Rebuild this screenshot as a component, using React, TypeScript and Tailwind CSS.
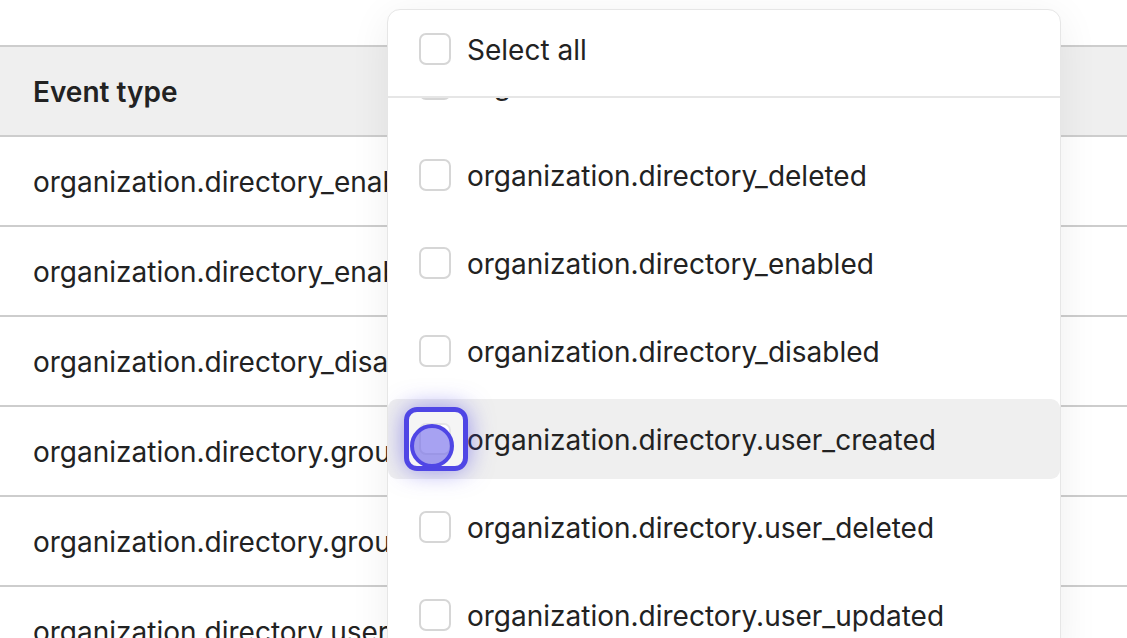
import { useState } from 'react';

const tableRows = [
  'organization.directory_enabled',
  'organization.directory_enabled',
  'organization.directory_disabled',
  'organization.directory.group_created',
  'organization.directory.group_deleted',
  'organization.directory.user_created',
];

const eventOptions = [
  'organization.user_created',
  'organization.directory_deleted',
  'organization.directory_enabled',
  'organization.directory_disabled',
  'organization.directory.user_created',
  'organization.directory.user_deleted',
  'organization.directory.user_updated',
  'organization.directory.group_created',
];

const Checkbox = ({ checked, onToggle }: { checked: boolean; onToggle: () => void }) => (
  <button
    className={`h-8 w-8 shrink-0 rounded-[7px] border-2 ${checked ? 'border-[#4f46e5] bg-[#4f46e5]' : 'border-[#d6d6d6] bg-white'}`}
    onClick={onToggle}
    type="button"
  />
);

export default function App() {
  const [selected, setSelected] = useState<string[]>([]);
  const [allSelected, setAllSelected] = useState(false);

  const toggle = (name: string) => {
    setSelected((prev) => (prev.includes(name) ? prev.filter((n) => n !== name) : [...prev, name]));
  };

  return (
    <div className="relative h-[638px] w-[1127px] overflow-hidden bg-white font-['Inter',sans-serif] text-[#222222]">
      <div className="pt-[45px]">
        <div className="flex h-[92px] items-center border-y-2 border-[#cdcdcd] bg-[#efefef] px-[33px] pt-[2px] text-[28px] font-semibold">
          Event type
        </div>
        {tableRows.map((row, i) => (
          <div
            key={i}
            className="flex h-[90px] items-center border-b-2 border-[#cdcdcd] px-[33px] pt-[2px] text-[28px] whitespace-nowrap"
          >
            {row}
          </div>
        ))}
      </div>

      <div className="absolute left-[387px] top-[9px] w-[674px] rounded-[13px] border border-[#e6e6e6] bg-white shadow-[0_8px_40px_rgba(0,0,0,0.07)]">
        <div className="flex h-[88px] items-center gap-4 border-b-2 border-[#e6e6e6] pb-[8px] pl-[31px] text-[28px]">
          <Checkbox checked={allSelected} onToggle={() => setAllSelected((v) => !v)} />
          <span className="pt-[2px]">Select all</span>
        </div>
        <div className="h-[560px] overflow-hidden">
          {/* list is scrolled down a bit, first option sits under the header */}
          <div className="-mt-[51px] flex flex-col gap-2">
            {eventOptions.map((name, i) => {
              const active = name === 'organization.directory.user_created';
              return (
                <div
                  key={name}
                  className={`relative flex h-20 items-center gap-4 rounded-[9px] pl-[31px] text-[28px] whitespace-nowrap ${active ? 'bg-[#efefef]' : ''} ${i === 0 ? 'pb-[6px]' : ''}`}
                >
                  <Checkbox checked={selected.includes(name)} onToggle={() => toggle(name)} />
                  <span className="pt-[2px]">{name}</span>
                  {active && (
                    <div className="pointer-events-none absolute left-[16px] top-[8px] h-16 w-16 rounded-[13px] border-[5px] border-[#4f46e5] bg-white/40 shadow-[0_0_24px_rgba(79,70,229,0.55)]">
                      <div className="absolute left-[1px] top-[12px] h-[44px] w-[44px] rounded-full border-4 border-[#4f46e5] bg-[#4f46e5]/50" />
                    </div>
                  )}
                </div>
              );
            })}
          </div>
        </div>
      </div>
    </div>
  );
}
